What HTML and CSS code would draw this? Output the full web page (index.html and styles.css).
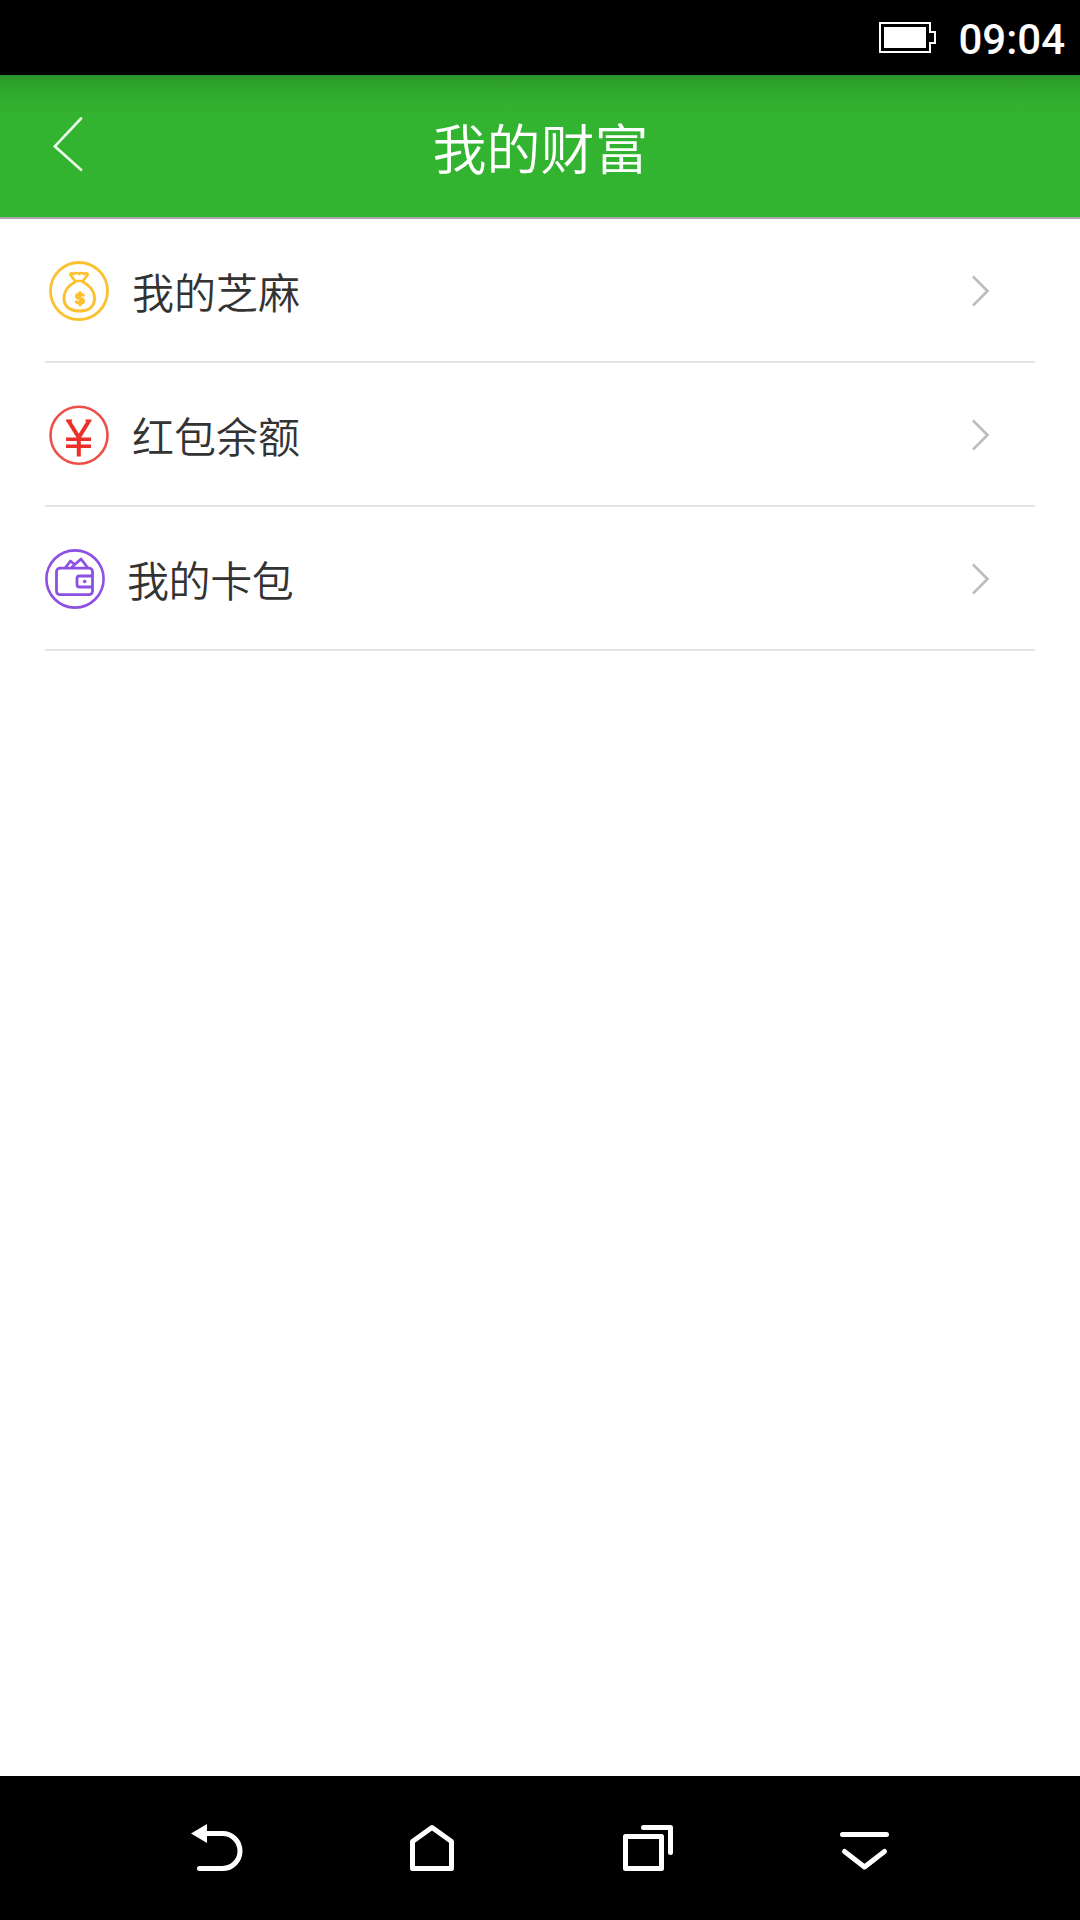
FILE: index.html
```html
<!DOCTYPE html>
<html lang="zh-CN">
<head>
<meta charset="utf-8">
<title>我的财富</title>
<link rel="stylesheet" href="styles.css">
</head>
<body>
<div class="status">
  <svg class="battery" width="58" height="32" viewBox="0 0 58 32">
    <path d="M1 1H51V10H56V21H51V30H1Z" fill="none" stroke="#fff" stroke-width="2"/>
    <rect x="5" y="5" width="42" height="21" fill="#fff"/>
  </svg>
  <span class="clock">09:04</span>
</div>
<header class="header">
  <svg class="back" width="32" height="58" viewBox="0 0 32 58">
    <path d="M29 1.500L2.800 29.300L29 52.800" fill="none" stroke="#fff" stroke-opacity=".9" stroke-width="2.600" stroke-linecap="round"/>
  </svg>
  <h1 class="title">我的财富</h1>
</header>
<main class="list">
  <a class="row">
    <svg class="icon" width="60" height="60" viewBox="0 0 60 60" fill="none" stroke="#fdc02f" stroke-width="3" stroke-linejoin="round" stroke-linecap="round">
      <circle cx="30" cy="30" r="28.500" stroke-width="2.800"/>
      <path d="M26 20L21.200 13.500Q21.500 11.500 25 13Q27.500 11 30 13Q32.500 11 35 13Q38.500 11.500 38.800 13.500L34 20Z" stroke-width="2.600"/>
      <path d="M26 21C20 24 15 30 15 37.500C15 46 22 50 30.500 50C39 50 45.500 46 45.500 37.500C45.500 30 40 24 34 21"/>
      <path d="M34.300 34.300Q33.500 33 31 33Q27.500 33 27.500 35.200Q27.500 37 31 37.600Q34.500 38.200 34.500 40.200Q34.500 42.300 31 42.300Q28 42.300 27.200 40.700M31 31.500V44" stroke-width="3"/>
    </svg>
    <span class="label">我的芝麻</span>
    <svg class="chevron" width="18" height="32" viewBox="0 0 18 32"><path d="M1 1.500L15.500 16L1 30.500"/></svg>
  </a>
  <a class="row">
    <svg class="icon" width="60" height="60" viewBox="0 0 60 60" fill="none" stroke="#ea3029">
      <circle cx="30" cy="30.200" r="28.500" stroke="#ee4f48" stroke-width="2.600"/>
      <path d="M19.300 15.500L29.800 32.500L40.300 15.500M29.800 32V51.500" stroke-width="4"/>
      <path d="M17 15.500H23M36.500 15.500H42.500" stroke-width="2"/>
      <path d="M17 34.200H42M17 41.200H42" stroke-width="3.400"/>
    </svg>
    <span class="label">红包余额</span>
    <svg class="chevron" width="18" height="32" viewBox="0 0 18 32"><path d="M1 1.500L15.500 16L1 30.500"/></svg>
  </a>
  <a class="row row-cards">
    <svg class="icon" width="60" height="60" viewBox="0 0 60 60" fill="none" stroke="#8d50e2" stroke-width="2.800" stroke-linejoin="round">
      <circle cx="30" cy="30" r="28.600" stroke-width="2.600"/>
      <rect x="11.500" y="19.200" width="36" height="26.500" rx="3.500"/>
      <path d="M48 27H34.500Q32 27 32 29.500V35.500Q32 38 34.500 38H48"/>
      <path d="M20.500 18.500L25.500 12L29.500 15.500M26.500 18.500L36 10L42.500 18.500"/>
      <circle cx="39.700" cy="32.500" r="1.800" fill="#8d50e2" stroke="none"/>
    </svg>
    <span class="label">我的卡包</span>
    <svg class="chevron" width="18" height="32" viewBox="0 0 18 32"><path d="M1 1.500L15.500 16L1 30.500"/></svg>
  </a>
</main>
<nav class="navbar">
  <svg width="216" height="144" viewBox="0 0 216 144">
    <path d="M98 57.500H114.500A17.500 17.500 0 0 1 114.500 92.500H91.500" class="line"/>
    <path d="M83 57.500L99 48V67Z" fill="#fff"/>
  </svg>
  <svg width="216" height="144" viewBox="0 0 216 144">
    <path d="M88.500 92.500V65.500L108 51.500L127.500 65.500V92.500Z" class="line"/>
  </svg>
  <svg width="216" height="144" viewBox="0 0 216 144">
    <path d="M121.500 60.500V92.500H85.500V60.500Z" class="line"/>
    <path d="M103.500 51.500H130.500V76.500" class="line"/>
  </svg>
  <svg width="216" height="144" viewBox="0 0 216 144">
    <path d="M86.500 58.500H130.500M88.500 75.500L108.500 91L128.500 75.500" class="line"/>
  </svg>
</nav>
</body>
</html>
```
FILE: styles.css
```css
* {
  box-sizing: border-box;
}
body {
  margin: 0;
  width: 1080px;
  height: 1920px;
  display: flex;
  flex-direction: column;
  background: #fff;
  font-family: "Noto Sans CJK SC", sans-serif;
  font-weight: 350;
}
.status {
  height: 75px;
  background: #000;
  display: flex;
  justify-content: flex-end;
  align-items: center;
  gap: 21px;
  padding-right: 15px;
}
.clock {
  color: #fff;
  font-family: Roboto, sans-serif;
  font-weight: 500;
  font-size: 42px;
  line-height: 50px;
  padding-top: 4px;
}
.header {
  height: 144px;
  display: grid;
  grid-template-columns: 180px 1fr 180px;
  align-items: center;
  background: linear-gradient(#2a9428 0, #2da02a 8px, #31ac2e 22px, #33b430 42px);
  border-bottom: 2px solid #aaa;
}
.back {
  margin-left: 52px;
}
.title {
  margin: 0;
  padding: 2px 0 0 1px;
  text-align: center;
  color: #fff;
  font-size: 54px;
  font-weight: 350;
  line-height: 80px;
}
.list {
  flex: 1;
  padding: 0 45px;
}
.row {
  height: 144px;
  display: flex;
  align-items: center;
  gap: 23px;
  padding: 2px 45px 0 4px;
  border-bottom: 2px solid #e4e4e4;
}
.row-cards {
  gap: 22px;
  padding-left: 0;
}
.label {
  flex: 1;
  font-size: 42px;
  line-height: 62px;
  color: #333;
}
.row-cards .label {
  letter-spacing: -0.4px;
}
.chevron {
  fill: none;
  stroke: #bdbdbd;
  stroke-width: 2.6;
}
.navbar {
  height: 144px;
  padding: 0 108px;
  background: #000;
  display: grid;
  grid-template-columns: repeat(4, 216px);
}
.line {
  fill: none;
  stroke: #fff;
  stroke-width: 5;
  stroke-linecap: round;
  stroke-linejoin: round;
}
```
